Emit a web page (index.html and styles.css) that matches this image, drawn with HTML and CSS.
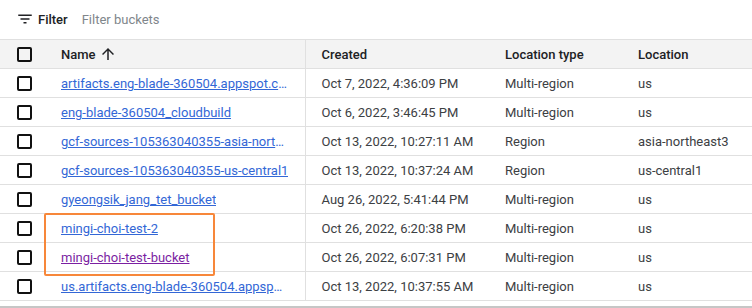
FILE: index.html
```html
<!DOCTYPE html>
<html>
<head>
  <title>Buckets</title>
  <link rel="stylesheet" href="styles.css">
</head>
<body>
  <div class="filter-bar">
    <svg class="filter-icon" viewBox="0 0 24 24" width="18" height="18"><path d="M10 18h4v-2h-4v2zM3 6v2h18V6H3zm3 7h12v-2H6v2z"/></svg>
    <span class="filter-label">Filter</span>
    <span class="filter-input">Filter buckets</span>
  </div>

  <div class="table-wrap">
    <table class="buckets">
      <colgroup>
        <col class="col-check">
        <col class="col-name">
        <col class="col-created">
        <col class="col-type">
        <col>
      </colgroup>
      <thead>
        <tr>
          <th class="check"><span class="checkbox"></span></th>
          <th class="name">
            <span class="sort">Name
              <svg viewBox="0 0 24 24" width="18" height="18"><path d="M4 12l1.41 1.41L11 7.83V20h2V7.83l5.58 5.59L20 12l-8-8-8 8z"/></svg>
            </span>
          </th>
          <th>Created</th>
          <th>Location type</th>
          <th>Location</th>
        </tr>
      </thead>
      <tbody>
        <tr>
          <td class="check"><span class="checkbox"></span></td>
          <td class="name"><a href="#" title="artifacts.eng-blade-360504.appspot.com">artifacts.eng-blade-360504.appspot.com</a></td>
          <td>Oct 7, 2022, 4:36:09 PM</td>
          <td>Multi-region</td>
          <td>us</td>
        </tr>
        <tr>
          <td class="check"><span class="checkbox"></span></td>
          <td class="name"><a href="#">eng-blade-360504_cloudbuild</a></td>
          <td>Oct 6, 2022, 3:46:45 PM</td>
          <td>Multi-region</td>
          <td>us</td>
        </tr>
        <tr>
          <td class="check"><span class="checkbox"></span></td>
          <td class="name"><a href="#" title="gcf-sources-105363040355-asia-northeast3">gcf-sources-105363040355-asia-northeast3</a></td>
          <td>Oct 13, 2022, 10:27:11 AM</td>
          <td>Region</td>
          <td>asia-northeast3</td>
        </tr>
        <tr>
          <td class="check"><span class="checkbox"></span></td>
          <td class="name"><a href="#">gcf-sources-105363040355-us-central1</a></td>
          <td>Oct 13, 2022, 10:37:24 AM</td>
          <td>Region</td>
          <td>us-central1</td>
        </tr>
        <tr>
          <td class="check"><span class="checkbox"></span></td>
          <td class="name"><a href="#">gyeongsik_jang_tet_bucket</a></td>
          <td>Aug 26, 2022, 5:41:44 PM</td>
          <td>Multi-region</td>
          <td>us</td>
        </tr>
        <tr>
          <td class="check"><span class="checkbox"></span></td>
          <td class="name"><a href="#">mingi-choi-test-2</a></td>
          <td>Oct 26, 2022, 6:20:38 PM</td>
          <td>Multi-region</td>
          <td>us</td>
        </tr>
        <tr>
          <td class="check"><span class="checkbox"></span></td>
          <td class="name"><a href="#" class="visited">mingi-choi-test-bucket</a></td>
          <td>Oct 26, 2022, 6:07:31 PM</td>
          <td>Multi-region</td>
          <td>us</td>
        </tr>
        <tr>
          <td class="check"><span class="checkbox"></span></td>
          <td class="name"><a href="#" title="us.artifacts.eng-blade-360504.appspot.com">us.artifacts.eng-blade-360504.appspot.com</a></td>
          <td>Oct 13, 2022, 10:37:55 AM</td>
          <td>Multi-region</td>
          <td>us</td>
        </tr>
      </tbody>
    </table>
    <!-- annotation around the two mingi-choi buckets -->
    <div class="highlight"></div>
  </div>
  <div class="table-end"></div>
</body>
</html>
```

FILE: styles.css
```css
:root {
  --text-primary: #202124;
  --text-secondary: #3c4043;
  --text-hint: #80868b;
  --border: #e0e0e0;
  --header-bg: #f3f3f3;
  --link: #3367d6;
  --link-visited: #7b1fa2;
  --annotation: #f7873a;
}

* {
  margin: 0;
  padding: 0;
  box-sizing: border-box;
}

body {
  width: 752px;
  height: 308px;
  overflow: hidden;
  background: #ffffff;
  font-family: Roboto, "Liberation Sans", sans-serif;
  font-size: 13px;
  color: var(--text-secondary);
}

.filter-bar {
  height: 38px;
  display: flex;
  align-items: center;
  padding-left: 16px;
}

.filter-icon {
  fill: var(--text-primary);
  margin-right: 4px;
}

.filter-label {
  font-weight: 500;
  color: var(--text-primary);
  margin-right: 14px;
}

.filter-input {
  color: var(--text-hint);
}

.table-wrap {
  position: relative;
  margin-top: 1px;
}

.buckets {
  width: 100%;
  border-collapse: collapse;
  table-layout: fixed;
  border-top: 1px solid var(--border);
}

.col-check { width: 45px; }
.col-name { width: 260px; }
.col-created { width: 184px; }
.col-type { width: 133px; }

.buckets th,
.buckets td {
  height: 29px;
  padding: 0 0 0 16px;
  border-bottom: 1px solid var(--border);
  text-align: left;
  white-space: nowrap;
  vertical-align: middle;
}

.buckets th {
  background: var(--header-bg);
  font-weight: 500;
  color: var(--text-primary);
}

.buckets .check {
  padding-left: 17px;
}

.buckets .name {
  border-right: 1px solid var(--border);
  padding-right: 15px;
}

.checkbox {
  display: block;
  width: 15px;
  height: 15px;
  border: 2px solid #111111;
  border-radius: 2px;
}

.sort {
  display: inline-flex;
  align-items: center;
  gap: 3px;
}

.sort svg {
  fill: var(--text-primary);
}

.name a {
  display: inline-block;
  max-width: 100%;
  overflow: hidden;
  text-overflow: ellipsis;
  white-space: nowrap;
  vertical-align: middle;
  color: var(--link);
  text-decoration: underline;
}

.name a.visited {
  color: var(--link-visited);
}

.highlight {
  position: absolute;
  left: 44px;
  top: 174px;
  width: 171px;
  height: 63px;
  border: 2px solid var(--annotation);
  border-radius: 2px;
  pointer-events: none;
}

.table-end {
  height: 7px;
  border-bottom: 2px solid #c6c6c6;
}
```
